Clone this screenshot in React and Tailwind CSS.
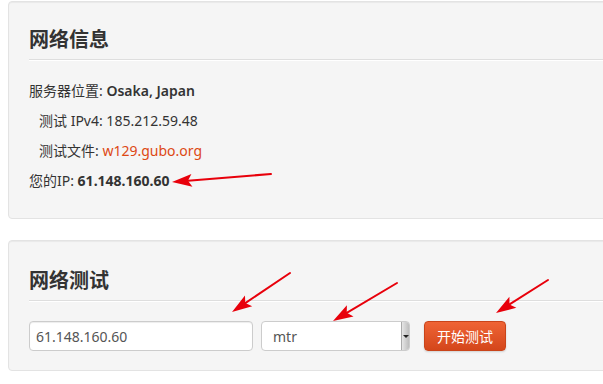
import React from 'react';

const FONT = { fontFamily: '"Noto Sans", "Noto Sans CJK SC", sans-serif' };

// red annotation arrows: [tailX, tailY, tipX, tipY]
const ARROWS = [
  [271, 174, 172, 182],
  [290, 273, 232, 312],
  [397, 283, 333, 321],
  [548, 280, 496, 313],
];

function Arrow({ x1, y1, x2, y2 }) {
  const dx = x2 - x1;
  const dy = y2 - y1;
  const len = Math.hypot(dx, dy);
  const ux = dx / len;
  const uy = dy / len;
  const headLen = 20;
  const half = 6.5;
  const bx = x2 - ux * headLen;
  const by = y2 - uy * headLen;
  const pts = [
    `${x2},${y2}`,
    `${bx - uy * half},${by + ux * half}`,
    `${bx + ux * 4},${by + uy * 4}`,
    `${bx + uy * half},${by - ux * half}`,
  ].join(' ');
  return (
    <g>
      <line x1={x1} y1={y1} x2={bx + ux * 4} y2={by + uy * 4} stroke="#e8000b" strokeWidth="2" strokeLinecap="round" />
      <polygon points={pts} fill="#e8000b" />
    </g>
  );
}

function Rule() {
  return <div className="border-t border-t-[#dedede] border-b border-b-white" />;
}

export default function App() {
  return (
    <div className="relative w-[603px] h-[384px] overflow-hidden bg-white text-[14px] text-[#333]" style={FONT}>
      <div className="ml-[8px] mt-[1px] w-[620px] bg-[#f5f5f5] border border-[#e3e3e3] rounded-[4px] shadow-[inset_0_1px_1px_rgba(0,0,0,0.05)] pt-[19px] pl-[20px] pr-[20px] pb-[27px]">
        <h3 className="text-[20px] font-bold leading-[38px]">网络信息</h3>
        <Rule />
        <div className="mt-[20px] flex flex-col gap-[10px] leading-[20px]">
          <div>服务器位置: <span className="font-semibold">Osaka, Japan</span></div>
          <div className="pl-[10px]">测试 IPv4: 185.212.59.48</div>
          <div className="pl-[10px]">测试文件: <a href="#" className="text-[#dd4814]">w129.gubo.org</a></div>
          <div>您的IP: <span className="font-bold">61.148.160.60</span></div>
        </div>
      </div>

      <div className="ml-[8px] mt-[21px] w-[620px] bg-[#f5f5f5] border border-[#e3e3e3] rounded-[4px] shadow-[inset_0_1px_1px_rgba(0,0,0,0.05)] pt-[21px] pl-[20px] pr-[20px] pb-[19px]">
        <h3 className="text-[20px] font-bold leading-[38px]">网络测试</h3>
        <Rule />
        <div className="mt-[19px] flex items-center">
          <div className="w-[224px] h-[30px] bg-white border border-[#cccccc] rounded-[4px] shadow-[inset_0_1px_1px_rgba(0,0,0,0.075)] flex items-center pl-[6px] text-[#555]">
            61.148.160.60
          </div>
          <div className="ml-[8px] w-[149px] h-[30px] bg-white border border-[#cccccc] rounded-[4px] flex items-center text-[#555]">
            <span className="flex-1 pl-[11px]">mtr</span>
            <div className="w-[8px] h-full bg-gradient-to-r from-[#e6e6e6] to-[#bdbdbd] border-l border-[#aaa] flex items-center justify-center rounded-r-[3px]">
              <div className="w-0 h-0 border-l-[3px] border-r-[3px] border-t-[3px] border-l-transparent border-r-transparent border-t-[#222]" />
            </div>
          </div>
          <button className="ml-[14px] w-[82px] h-[30px] rounded-[4px] border border-[#c9441a] bg-gradient-to-b from-[#ef6435] to-[#d4461a] text-white text-[14px] shadow-[0_1px_2px_rgba(0,0,0,0.15)]">
            开始测试
          </button>
        </div>
      </div>

      <svg className="absolute top-0 left-0 pointer-events-none" width="603" height="384">
        {ARROWS.map(([x1, y1, x2, y2], i) => (
          <Arrow key={i} x1={x1} y1={y1} x2={x2} y2={y2} />
        ))}
      </svg>
    </div>
  );
}
